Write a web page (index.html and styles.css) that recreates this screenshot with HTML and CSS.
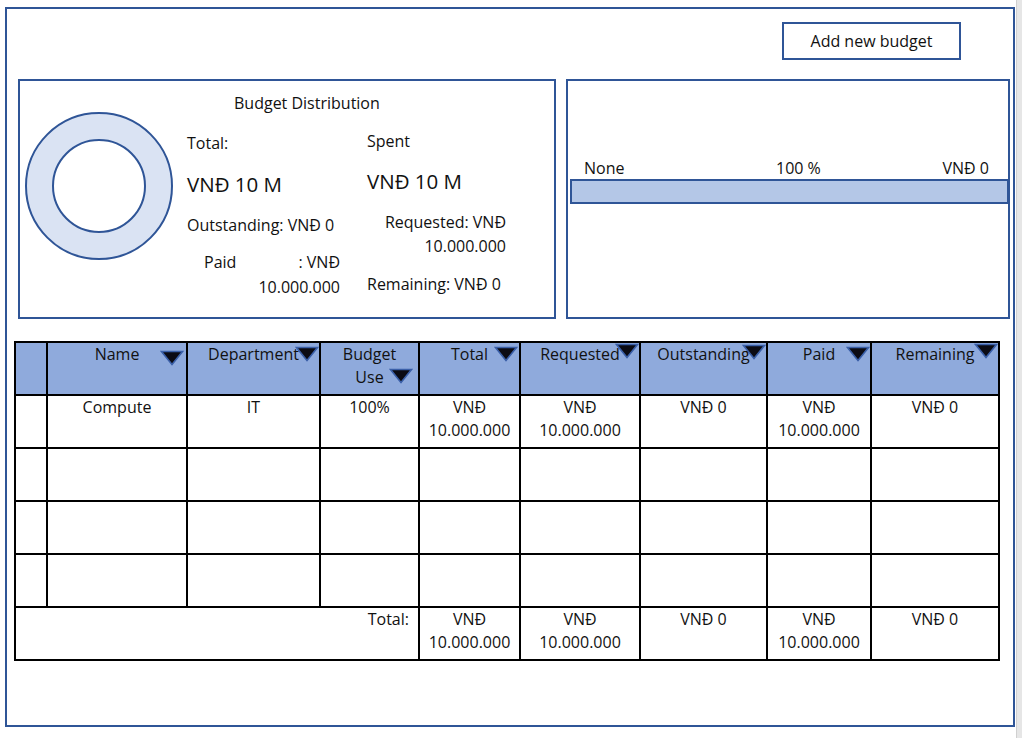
FILE: index.html
```html
<!DOCTYPE html>
<html lang="en">
<head>
    <meta charset="UTF-8">
    <meta name="viewport" content="width=device-width, initial-scale=1.0">
    <title>Budget</title>
    <link rel="stylesheet" href="styles.css">
</head>
<body>
    <div class="viewer">
        <div class="canvas">
            <div class="page">
                <div class="toolbar">
                    <button class="add-btn">Add new budget</button>
                </div>

                <div class="cards">
                    <div class="card dist-card">
                        <svg class="ring" width="150" height="150" viewBox="0 0 150 150">
                            <circle cx="75" cy="75" r="73" fill="#dae3f3" stroke="#2f5597" stroke-width="2"/>
                            <circle cx="75" cy="75" r="46" fill="#ffffff" stroke="#2f5597" stroke-width="2"/>
                        </svg>
                        <div class="dist">
                            <div class="dist-title">Budget Distribution</div>
                            <div class="dist-cols">
                                <div class="col col-left">
                                    <div class="label first">Total:</div>
                                    <div class="big">VNĐ 10 M</div>
                                    <div class="label gap">Outstanding: VNĐ 0</div>
                                    <div class="paid">
                                        <div class="paid-line"><span>Paid</span><span>: VNĐ</span></div>
                                        <div class="paid-val">10.000.000</div>
                                    </div>
                                </div>
                                <div class="col col-right">
                                    <div class="label first">Spent</div>
                                    <div class="big">VNĐ 10 M</div>
                                    <div class="requested">
                                        <div>Requested: VNĐ</div>
                                        <div>10.000.000</div>
                                    </div>
                                    <div class="label remaining">Remaining: VNĐ 0</div>
                                </div>
                            </div>
                        </div>
                    </div>

                    <div class="card bar-card">
                        <div class="bar-labels">
                            <span>None</span>
                            <span>100 %</span>
                            <span class="end">VNĐ 0</span>
                        </div>
                        <div class="bar"></div>
                    </div>
                </div>

                <table class="budget-table">
                    <colgroup>
                        <col style="width:32px">
                        <col style="width:140px">
                        <col style="width:133px">
                        <col style="width:99px">
                        <col style="width:101px">
                        <col style="width:120px">
                        <col style="width:127px">
                        <col style="width:104px">
                        <col style="width:128px">
                    </colgroup>
                    <thead>
                        <tr>
                            <th></th>
                            <th>Name<span class="sort s-name"></span></th>
                            <th>Department<span class="sort s-dept"></span></th>
                            <th>Budget<br>Use<span class="sort s-use"></span></th>
                            <th>Total<span class="sort s-total"></span></th>
                            <th>Requested<span class="sort s-req"></span></th>
                            <th>Outstanding<span class="sort s-out"></span></th>
                            <th>Paid<span class="sort s-paid"></span></th>
                            <th>Remaining<span class="sort s-rem"></span></th>
                        </tr>
                    </thead>
                    <tbody>
                        <tr>
                            <td></td>
                            <td>Compute</td>
                            <td>IT</td>
                            <td>100%</td>
                            <td>VNĐ<br>10.000.000</td>
                            <td>VNĐ<br>10.000.000</td>
                            <td>VNĐ 0</td>
                            <td>VNĐ<br>10.000.000</td>
                            <td>VNĐ 0</td>
                        </tr>
                        <tr><td></td><td></td><td></td><td></td><td></td><td></td><td></td><td></td><td></td></tr>
                        <tr><td></td><td></td><td></td><td></td><td></td><td></td><td></td><td></td><td></td></tr>
                        <tr><td></td><td></td><td></td><td></td><td></td><td></td><td></td><td></td><td></td></tr>
                    </tbody>
                    <tfoot>
                        <tr>
                            <td colspan="4" class="total-label">Total:</td>
                            <td>VNĐ<br>10.000.000</td>
                            <td>VNĐ<br>10.000.000</td>
                            <td>VNĐ 0</td>
                            <td>VNĐ<br>10.000.000</td>
                            <td>VNĐ 0</td>
                        </tr>
                    </tfoot>
                </table>
            </div>
        </div>
        <div class="gutter"></div>
    </div>

    <script>
        // sort arrows share one svg shape
        document.querySelectorAll('.sort').forEach(el => {
            el.innerHTML = '<svg width="24" height="16" viewBox="0 0 24 16">' +
                '<polygon points="1.5,1.5 22.5,1.5 12,14.5" fill="#0b0b14" stroke="#3a5fa8" stroke-width="1.6" stroke-linejoin="miter"/>' +
                '</svg>';
        });
    </script>
</body>
</html>
```

FILE: styles.css
```css
:root {
    --frame-color: #2f5597;
    --ring-fill: #dae3f3;
    --bar-fill: #b4c7e7;
    --header-fill: #8faadc;
    --text-color: #111111;
}

body {
    margin: 0;
    font-family: "Open Sans", "Noto Sans", sans-serif;
    font-size: 16px;
    color: var(--text-color);
    background-color: #ffffff;
}

.viewer {
    display: flex;
    height: 100vh;
}

.canvas {
    width: 1016px;
    padding-top: 7px;
    padding-left: 5px;
    box-sizing: border-box;
}

.gutter {
    flex: 1;
    background-color: #e6e6e6;
    border-left: 1px solid #d0d0d0;
}

.page {
    width: 1010px;
    height: 720px;
    border: 2px solid var(--frame-color);
    box-sizing: border-box;
    padding: 13px 0 0 11px;
}

.toolbar {
    display: flex;
    justify-content: flex-end;
    padding-right: 52px;
}

.add-btn {
    width: 179px;
    height: 38px;
    background: #ffffff;
    border: 2px solid var(--frame-color);
    font-family: inherit;
    font-size: 16px;
    color: var(--text-color);
    padding: 0;
}

.cards {
    display: flex;
    gap: 10px;
    margin-top: 19px;
}

.card {
    height: 240px;
    border: 2px solid var(--frame-color);
    box-sizing: border-box;
}

.dist-card {
    width: 538px;
    display: flex;
}

.ring {
    margin: 30px 0 0 4px;
    flex-shrink: 0;
}

.dist {
    margin-left: 13px;
    padding-top: 12px;
}

.dist-title {
    line-height: 20px;
    padding-left: 47px;
}

.dist-cols {
    display: flex;
}

.col-left {
    width: 180px;
}

.col-right {
    width: 139px;
}

.label {
    line-height: 20px;
    white-space: nowrap;
}

.col-left .first {
    margin-top: 20px;
}

.col-right .first {
    margin-top: 18px;
}

.big {
    font-size: 20.5px;
    line-height: 24px;
    margin-top: 19px;
    white-space: nowrap;
}

.col-right .big {
    margin-top: 18px;
}

.gap {
    margin-top: 19px;
}

.paid {
    width: 153px;
    margin-top: 15px;
    line-height: 25px;
}

.paid-line {
    display: flex;
    justify-content: space-between;
    padding-left: 17px;
}

.paid-val {
    text-align: right;
}

.requested {
    text-align: right;
    line-height: 24px;
    margin-top: 17px;
    white-space: nowrap;
}

.remaining {
    margin-top: 16px;
}

.bar-card {
    width: 444px;
}

.bar-labels {
    display: grid;
    grid-template-columns: 192px auto 1fr;
    line-height: 20px;
    padding: 77px 19px 0 16px;
}

.bar-labels .end {
    text-align: right;
}

.bar {
    height: 25px;
    width: 439px;
    margin: 1px 0 0 2px;
    background-color: var(--bar-fill);
    border: 2px solid var(--frame-color);
    box-sizing: border-box;
}

.budget-table {
    margin: 22px 0 0 -4px;
    width: 984px;
    border-collapse: collapse;
    table-layout: fixed;
}

.budget-table th,
.budget-table td {
    border: 2px solid #000000;
    height: 51px;
    padding: 0 2px;
    vertical-align: top;
    text-align: center;
    line-height: 23px;
    font-weight: normal;
    white-space: nowrap;
}

.budget-table th {
    background-color: var(--header-fill);
    position: relative;
}

.budget-table .total-label {
    text-align: right;
    padding-right: 9px;
}

.sort {
    position: absolute;
    line-height: 0;
}

.s-name { right: 2px; top: 7px; }
.s-dept { right: 0; top: 3px; }
.s-use { right: 5px; top: 25px; }
.s-total { right: 1px; top: 3px; }
.s-req { right: 0; top: 0; }
.s-out { right: 0; top: 1px; }
.s-paid { right: 0; top: 3px; }
.s-rem { right: 0; top: 0; }
```
